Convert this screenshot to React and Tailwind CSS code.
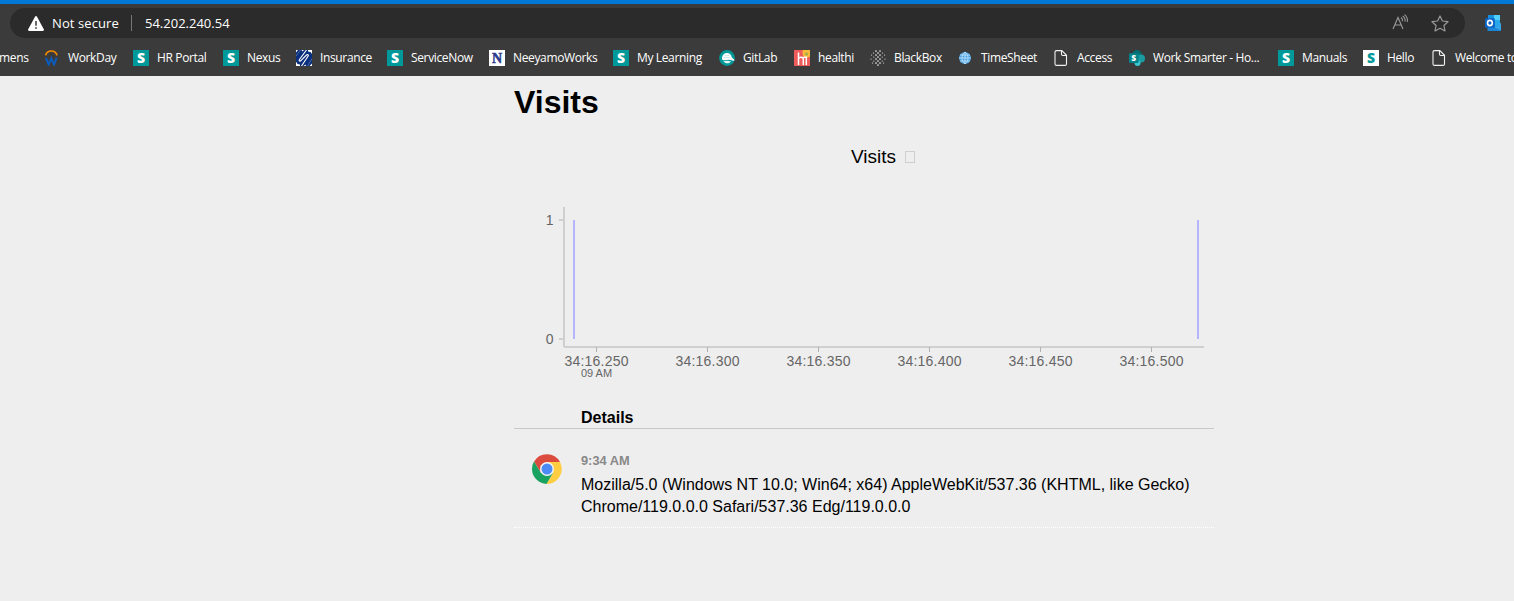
import React from "react";

function SIcon({ light }) {
  return (
    <svg className="overflow-visible" width="16" height="16" viewBox="0 0 16 16">
      <rect width="16" height="16" fill={light ? "#ffffff" : "#009999"} />
      <text x="8" y="13" textAnchor="middle" fontFamily="Open Sans, sans-serif" fontWeight="800" fontSize="14" fill={light ? "#009999" : "#ffffff"}>S</text>
    </svg>
  );
}

function WorkdayIcon() {
  return (
    <svg width="16" height="16" viewBox="0 0 16 16" fill="none">
      <path d="M1.600 5.400C2.400 2.400 4.600 1 7.300 1s4.900 1.400 5.700 4.400" stroke="#f38b00" strokeWidth="1.700" />
      <path d="M2 7.800l2.600 6.800L7.300 8.400l2.700 6.200 2.600-6.800" stroke="#0b5cc0" strokeWidth="1.900" />
    </svg>
  );
}

function InsuranceIcon() {
  return (
    <svg width="16" height="16" viewBox="0 0 16 16">
      <rect width="16" height="16" fill="#0a2f7c" />
      <path d="M0 0h2L0 2.500zM5.500 0H8L6.500 1.500zM12 0h4v4l-1.500-2L12 1.500zM0 11.500L1.500 14 4 14.500V16H0zM16 13.500V16h-2.500zM7.500 16l2-1.500.5 1.500z" fill="#fff" />
      <path d="M10.500 0L3.500 9.500c-.8 1.200 0 2.200 1.200 1.300L10.500 5c1.200-1 2.400 0 1.500 1.300L5.500 16" fill="none" stroke="#fff" strokeWidth="1.100" />
      <path d="M4.500 0L0 6M16 8.500L11.500 16" stroke="#7d92c0" strokeWidth=".6" />
    </svg>
  );
}

function NeeyamoIcon() {
  return (
    <svg className="overflow-visible" width="16" height="16" viewBox="0 0 16 16">
      <rect width="16" height="16" fill="#fff" />
      <text x="8" y="12.500" textAnchor="middle" fontFamily="Liberation Serif, serif" fontWeight="700" fontSize="14" fill="#2b3a8c" stroke="#2b3a8c" strokeWidth=".5">N</text>
    </svg>
  );
}

function GitLabIcon() {
  return (
    <svg width="16" height="16" viewBox="0 0 16 16">
      <circle cx="8" cy="8" r="7.900" fill="#099" />
      <path d="M3 9.200C2.800 5.500 5 3 8 3c2.600 0 4.400 1.600 4.800 4.400l2.600 2.400c.2.700-.3 1-1 .9L10 9.800l-5.800.4z" fill="#fff" />
      <path d="M4.500 11l4.500-.3 3 .8c-.8 1.200-2 1.800-3.600 1.800-1.600 0-3-.8-3.900-2.300z" fill="#e5f5f5" />
      <path d="M4.300 7.600h7M5.200 5.600h5" stroke="#a9dcdc" strokeWidth=".6" />
    </svg>
  );
}

function HealthiIcon() {
  return (
    <svg width="16" height="16" viewBox="0 0 16 16">
      <rect width="16" height="16" fill="#ee5b5b" />
      <path d="M9 0h7v6.500c-1.500 1.500-4.500 1.500-6 0C8.500 5 8 2 9 0z" fill="#f6b93b" />
      <circle cx="12.500" cy="4" r="1.500" fill="#9fae4a" />
      <path d="M4.500 2.500V15M4.500 9c1-2.300 4.800-2.300 4.800.6V15M12.300 7v8M9.500 7.200h3.600" fill="none" stroke="#fff" strokeWidth="1.500" />
    </svg>
  );
}

function BlackBoxIcon() {
  const rows = [
    [1, [6, 10]], [3, [3.500, 8, 12.500]], [5, [1.500, 6, 10, 14.500]], [7, [3.800, 8, 12.200]],
    [9, [1, 6, 10, 15]], [11, [3.800, 8, 12.200]], [13, [2.500, 6, 10, 13.500]], [15, [8]],
  ];
  return (
    <svg width="16" height="16" viewBox="0 0 16 16">
      {rows.map(([y, xs]) => xs.map((x) => (
        <circle key={x + "-" + y} cx={x} cy={y} r={Math.abs(x - 8) < 4 ? 0.85 : 0.6} fill="#e4e4e4" />
      )))}
    </svg>
  );
}

function GlobeIcon() {
  return (
    <svg width="16" height="16" viewBox="0 0 16 16">
      <circle cx="8" cy="8" r="6" fill="#4ba3e3" />
      <path d="M2 8h12M3 5h10M3 11h10M8 2v12M8 2C4 5 4 11 8 14M8 2c4 3 4 9 0 12" fill="none" stroke="#c5e4fa" strokeWidth=".8" />
    </svg>
  );
}

function PageIcon() {
  return (
    <svg width="16" height="16" viewBox="0 0 16 16" fill="none" stroke="#f0f0f0" strokeWidth="1.100">
      <path d="M3.500.6h5.300l4.700 4.700v8.600c0 .9-.6 1.500-1.500 1.500H3.500c-.9 0-1.500-.6-1.500-1.500V2.100C2 1.200 2.600.6 3.500.6z" />
      <path d="M8.500.8v3.500c0 .7.5 1.200 1.200 1.200h3.600" />
    </svg>
  );
}

function SharePointIcon() {
  return (
    <svg className="overflow-visible" width="16" height="16" viewBox="0 0 16 16">
      <circle cx="8" cy="4.500" r="4.500" fill="#036c70" />
      <circle cx="12" cy="8.500" r="4" fill="#1a9ba1" />
      <circle cx="8.500" cy="13" r="3" fill="#37c6d0" />
      <rect x="0" y="3.300" width="9.600" height="9.600" rx=".8" fill="#038387" />
      <text x="4.800" y="11" textAnchor="middle" fontFamily="Open Sans, sans-serif" fontWeight="800" fontSize="8.500" fill="#fff">S</text>
    </svg>
  );
}

function OutlookIcon() {
  return (
    <svg width="16" height="16" viewBox="0 0 16 16">
      <path d="M3 0h12v13H3z" fill="#28a8ea" />
      <path d="M3 0h6v5H3z" fill="#1490df" />
      <path d="M9 0h6v5H9z" fill="#50d0ff" />
      <path d="M2.500 16V9l6.500 3.500L16 8v7.500q0 .5-.5.5z" fill="#1a86d8" />
      <path d="M9 12.300L16 8v7.500z" fill="#35a5ea" />
      <rect x="0" y="3.300" width="9.800" height="9.400" rx=".8" fill="#0a63c4" />
      <ellipse cx="4.900" cy="8" rx="2.400" ry="2.600" fill="none" stroke="#fff" strokeWidth="1.600" />
    </svg>
  );
}

function ChromeIcon() {
  return (
    <svg width="30" height="30" viewBox="0 0 30 30" className="block">
      <path d="M2.010 7.500A15 15 0 0 1 28 7.900H15L8.700 11.400 8.700 18.500z" fill="#db4c3f" />
      <path d="M28 7.900A15 15 0 0 1 14.500 30L21.300 18.500 15 7.900z" fill="#ffcd41" />
      <path d="M2.010 7.500A15 15 0 0 0 14.500 30L21.200 18.600H8.600z" fill="#1aa260" />
      <circle cx="15" cy="15" r="7" fill="#f4f4f4" />
      <circle cx="15" cy="15" r="5.500" fill="#4c8bf5" />
    </svg>
  );
}

const bookmarks = [
  [<WorkdayIcon />, "WorkDay", "w-[49px]"],
  [<SIcon />, "HR Portal", "w-[50px]"],
  [<SIcon />, "Nexus", "w-[33px]"],
  [<InsuranceIcon />, "Insurance", "w-[51px]"],
  [<SIcon />, "ServiceNow", "w-[62px]"],
  [<NeeyamoIcon />, "NeeyamoWorks", "w-[84px]"],
  [<SIcon />, "My Learning", "w-[66px]"],
  [<GitLabIcon />, "GitLab", "w-[35px]"],
  [<HealthiIcon />, "healthi", "w-[36px]"],
  [<BlackBoxIcon />, "BlackBox", "w-[47px]"],
  [<GlobeIcon />, "TimeSheet", "w-[56px]"],
  [<PageIcon />, "Access", "w-[36px]"],
  [<SharePointIcon />, "Work Smarter - Ho...", "w-[109px]"],
  [<SIcon />, "Manuals", "w-[45px]"],
  [<SIcon light />, "Hello", "w-[28px]"],
  [<PageIcon />, "Welcome to", "w-[70px]"],
];

function BrowserBar() {
  return (
    <header className="h-[76px] overflow-hidden border-t-4 border-[#0078d7] bg-[#3b3b3b] pt-1 font-['Open_Sans',sans-serif] text-white">
      <div className="flex h-[30px] items-center">
        <div className="ml-[10px] flex h-[30px] w-[1455px] items-center rounded-full bg-[#2b2b2b] pl-[18px] pr-4 text-[13px]">
          <svg width="16" height="15" viewBox="0 0 16 15">
            <path d="M7 .7c.5-.9 1.500-.9 2 0l6.800 12.500c.4.800 0 1.800-1 1.800H1.200c-1 0-1.400-1-1-1.800z" fill="#fff" />
            <path d="M7.300 5h1.400v4.800H7.300zM7.200 11.300h1.600v1.500H7.200z" fill="#2b2b2b" />
          </svg>
          <span className="ml-2 w-[79px] whitespace-nowrap pt-0.5 tracking-[0.1px]">Not secure</span>
          <span className="h-4 w-px bg-[#777]" />
          <span className="ml-[13px] whitespace-nowrap pt-0.5 text-[13px]">54.202.240.54</span>
          <svg className="-mt-0.5 ml-auto" width="17" height="16" viewBox="0 0 17 16" fill="none" stroke="#999" strokeWidth="1.100">
            <path d="M1 15L6 3.500 11 15M2.800 11h6.400M9 3.500c1.300.9 1.700 2.200 1.500 3.800M10.700 2c2 1.300 2.600 3.300 2.300 5.600M12.500.6c2.500 1.900 3.300 4.300 2.800 7.200" />
          </svg>
          <svg className="ml-[22px]" width="18" height="17" viewBox="0 0 18 17" fill="none" stroke="#999" strokeWidth="1.200" strokeLinejoin="round">
            <path d="M9 1l2.400 5 5.600.7-4.100 3.800 1.100 5.500L9 13.300 4 16l1.100-5.500L1 6.700 6.600 6z" />
          </svg>
        </div>
        <div className="ml-5"><OutlookIcon /></div>
      </div>
      <nav className="flex h-10 w-[1560px] items-center gap-4 text-[12px]">
        <span className="w-[28px] whitespace-nowrap tracking-[-0.36px] -ml-px mr-px">mens</span>
        {bookmarks.map(([icon, label, width]) => (
          <div key={label} className="flex shrink-0 items-center gap-2">
            <span className="block size-4 [&>svg]:block">{icon}</span>
            <span className={"block whitespace-nowrap leading-4 tracking-[-0.36px] " + width}>{label}</span>
          </div>
        ))}
      </nav>
    </header>
  );
}

const ticks = [
  [596.5, "34:16.250"], [707.5, "34:16.300"], [818.5, "34:16.350"],
  [929.5, "34:16.400"], [1040.5, "34:16.450"], [1151.5, "34:16.500"],
];

function VisitsChart() {
  return (
    <svg className="block" width="700" height="190" viewBox="514 200 700 190" fontFamily="Liberation Sans, Arial, sans-serif">
      <g fill="#cfcfcf" shapeRendering="crispEdges">
        <rect x="563" y="207" width="2" height="140" />
        <rect x="564" y="346" width="640" height="2" />
        <rect x="559" y="219" width="4" height="2" />
        <rect x="559" y="338" width="4" height="2" />
      </g>
      <g fill="#b4b4ff" shapeRendering="crispEdges">
        <rect x="573" y="220" width="2" height="119" />
        <rect x="1197" y="220" width="2" height="119" />
      </g>
      <g fontSize="14" fill="#666">
        <text x="553.500" y="225" textAnchor="end">1</text>
        <text x="553.500" y="344" textAnchor="end">0</text>
        {ticks.map(([x, label]) => (
          <g key={label}>
            <rect x={x - 0.5} y="347" width="1" height="5" fill="#b0b0b0" shapeRendering="crispEdges" />
            <text x={x - 32} y="366" textLength="64">{label}</text>
          </g>
        ))}
        <text x="596.500" y="377" fontSize="11" textAnchor="middle">09 AM</text>
      </g>
    </svg>
  );
}

export default function App() {
  return (
    <div className="h-[601px] w-[1514px] overflow-hidden bg-[#eeeeee] font-['Liberation_Sans',Arial,sans-serif] text-black">
      <BrowserBar />
      <main className="ml-[514px] w-[700px]">
        <h1 className="pt-[6px] text-[32px] font-bold leading-10">Visits</h1>
        <div className="mt-[22px] flex h-6 items-center pl-[337px]">
          <h2 className="pt-0.5 text-[19px] leading-6">Visits</h2>
          <span className="ml-[9px] mt-px h-3 w-[10px] border border-[#cfcfcf]" />
        </div>
        <div className="mt-8"><VisitsChart /></div>
        <div className="mt-[15px] h-6 border-b border-[#c8c8c8] pl-[67px] pt-px text-[16px] font-bold leading-6">
          Details
        </div>
        <div className="flex h-[99px] border-b border-dotted border-white pl-[18px] pt-[23px]">
          <div className="mt-[2px] w-[49px]"><ChromeIcon /></div>
          <div>
            <div className="text-[12.8px] font-bold leading-[18px] text-[#888]">9:34 AM</div>
            <p className="mt-1 whitespace-nowrap text-[16px] leading-[22px]">
              Mozilla/5.0 (Windows NT 10.0; Win64; x64) AppleWebKit/537.36 (KHTML, like Gecko)<br />
              Chrome/119.0.0.0 Safari/537.36 Edg/119.0.0.0
            </p>
          </div>
        </div>
      </main>
    </div>
  );
}
